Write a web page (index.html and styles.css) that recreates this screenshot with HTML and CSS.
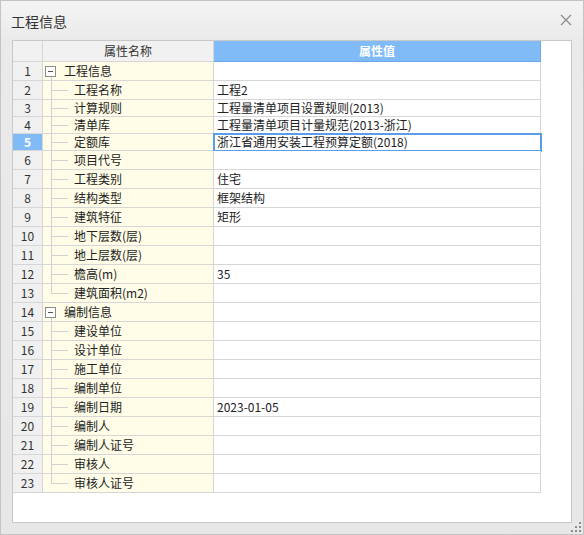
FILE: index.html
```html
<!DOCTYPE html>
<html lang="zh">
<head>
<meta charset="utf-8">
<title>工程信息</title>
<link rel="stylesheet" href="styles.css">
</head>
<body>
<div class="window">
  <div class="titlebar">
    <span class="title">工程信息</span>
    <span class="close"><svg width="12" height="12" viewBox="0 0 12 12"><path d="M1 1L11 11M11 1L1 11" stroke="#8a8a8a" stroke-width="1.2" fill="none"/></svg></span>
  </div>
  <div class="panel">
    <div class="grid">
      <div class="row head"><div class="c num"></div><div class="c name">属性名称</div><div class="c val">属性值</div></div>
      <div class="row"><div class="c num">1</div><div class="c name group"><span class="box"></span>工程信息</div><div class="c val"></div></div>
      <div class="row"><div class="c num">2</div><div class="c name child">工程名称</div><div class="c val">工程2</div></div>
      <div class="row short"><div class="c num">3</div><div class="c name child">计算规则</div><div class="c val">工程量清单项目设置规则(2013)</div></div>
      <div class="row short"><div class="c num">4</div><div class="c name child">清单库</div><div class="c val">工程量清单项目计量规范(2013-浙江)</div></div>
      <div class="row short sel"><div class="c num">5</div><div class="c name child">定额库</div><div class="c val">浙江省通用安装工程预算定额(2018)</div></div>
      <div class="row"><div class="c num">6</div><div class="c name child">项目代号</div><div class="c val"></div></div>
      <div class="row"><div class="c num">7</div><div class="c name child">工程类别</div><div class="c val">住宅</div></div>
      <div class="row"><div class="c num">8</div><div class="c name child">结构类型</div><div class="c val">框架结构</div></div>
      <div class="row"><div class="c num">9</div><div class="c name child">建筑特征</div><div class="c val">矩形</div></div>
      <div class="row"><div class="c num">10</div><div class="c name child">地下层数(层)</div><div class="c val"></div></div>
      <div class="row"><div class="c num">11</div><div class="c name child">地上层数(层)</div><div class="c val"></div></div>
      <div class="row"><div class="c num">12</div><div class="c name child">檐高(m)</div><div class="c val">35</div></div>
      <div class="row"><div class="c num">13</div><div class="c name child last">建筑面积(m2)</div><div class="c val"></div></div>
      <div class="row"><div class="c num">14</div><div class="c name group"><span class="box"></span>编制信息</div><div class="c val"></div></div>
      <div class="row"><div class="c num">15</div><div class="c name child">建设单位</div><div class="c val"></div></div>
      <div class="row"><div class="c num">16</div><div class="c name child">设计单位</div><div class="c val"></div></div>
      <div class="row"><div class="c num">17</div><div class="c name child">施工单位</div><div class="c val"></div></div>
      <div class="row"><div class="c num">18</div><div class="c name child">编制单位</div><div class="c val"></div></div>
      <div class="row"><div class="c num">19</div><div class="c name child">编制日期</div><div class="c val">2023-01-05</div></div>
      <div class="row"><div class="c num">20</div><div class="c name child">编制人</div><div class="c val"></div></div>
      <div class="row"><div class="c num">21</div><div class="c name child">编制人证号</div><div class="c val"></div></div>
      <div class="row"><div class="c num">22</div><div class="c name child">审核人</div><div class="c val"></div></div>
      <div class="row"><div class="c num">23</div><div class="c name child last">审核人证号</div><div class="c val"></div></div>
    </div>
  </div>
  <div class="grip"><svg width="10" height="10" viewBox="0 0 10 10" fill="#8e8e8e"><rect x="8" y="0" width="2" height="2"/><rect x="4" y="4" width="2" height="2"/><rect x="8" y="4" width="2" height="2"/><rect x="0" y="8" width="2" height="2"/><rect x="4" y="8" width="2" height="2"/><rect x="8" y="8" width="2" height="2"/></svg></div>
</div>
</body>
</html>
```
FILE: styles.css
```css
html, body {
  margin: 0;
  padding: 0;
}
body {
  font-family: "Noto Sans CJK SC", "Noto Sans", sans-serif;
  font-size: 12px;
  color: #222;
}
.window {
  position: relative;
  width: 584px;
  height: 535px;
  box-sizing: border-box;
  border: 1px solid #c4c4c4;
  background: linear-gradient(to bottom, #f4f4f4 0, #eaeaea 40px, #e7e7e7 100%);
}
.titlebar {
  height: 39px;
  display: flex;
  align-items: center;
  justify-content: space-between;
  padding: 0 11px 0 10px;
}
.title {
  font-size: 14px;
  color: #333;
  line-height: 20px;
  padding-top: 1px;
}
.close {
  display: flex;
  width: 12px;
  height: 12px;
  margin-top: -1px;
}
.panel {
  margin-left: 11px;
  width: 560px;
  height: 483px;
  box-sizing: border-box;
  border: 1px solid #c8c8c8;
  background: #fff;
}
.grid {
  display: flex;
  flex-direction: column;
  width: 528px;
}
.row {
  display: flex;
  height: 19px;
}
.row.short {
  height: 17px;
}
.row.head {
  height: 21px;
}
.c {
  box-sizing: border-box;
  border-right: 1px solid #d6d6d6;
  border-bottom: 1px solid #d6d6d6;
  display: flex;
  align-items: center;
  white-space: nowrap;
  line-height: 16px;
}
.num {
  width: 30px;
  background: #f0f0f0;
  justify-content: center;
  color: #333;
}
.name {
  width: 171px;
  background: #fffde8;
  color: #222;
}
.val {
  width: 327px;
  background: #fff;
  padding-left: 3px;
}
.head .num, .head .name {
  background: #f1f1f1;
}
.head .name {
  justify-content: center;
  color: #333;
}
.head .val {
  background: #80bbf8;
  border-right-color: #6aa8ee;
  border-bottom-color: #6aa8ee;
  justify-content: center;
  color: #fff;
  font-weight: bold;
  padding-left: 0;
}
.sel .num {
  background: #80bbf8;
  color: #fff;
  font-weight: bold;
}
.sel .val {
  outline: 2px solid #5a9ee8;
  outline-offset: -1px;
}
.group {
  padding-left: 2px;
  background-image: linear-gradient(#cfcfcf, #cfcfcf);
  background-repeat: no-repeat;
  background-size: 1px 4px;
  background-position: 8px 100%;
}
.box {
  display: inline-flex;
  align-items: center;
  justify-content: center;
  width: 9px;
  height: 9px;
  border: 1px solid #8c8c8c;
  background: #fff;
  margin-right: 8px;
  margin-top: 1px;
}
.box::before {
  content: "";
  width: 5px;
  height: 1px;
  background: #555;
}
.child {
  padding-left: 31px;
  background-image: linear-gradient(#d2d2d2, #d2d2d2), linear-gradient(#d2d2d2, #d2d2d2);
  background-repeat: no-repeat;
  background-size: 1px 100%, 17px 1px;
  background-position: 8px 0, 8px 50%;
}
.child.last {
  background-size: 1px 50%, 17px 1px;
  background-position: 8px 0, 8px 50%;
}
.grip {
  position: absolute;
  right: 2px;
  bottom: 2px;
  width: 10px;
  height: 10px;
  display: flex;
}
```
